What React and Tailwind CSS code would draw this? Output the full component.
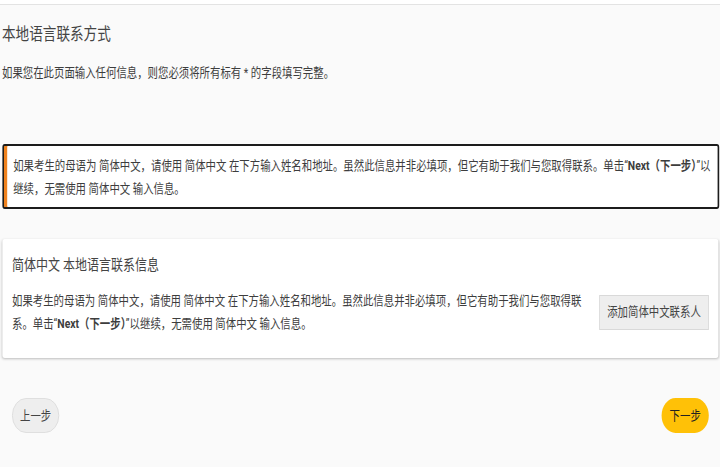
import React from "react";

const font = { fontFamily: 'Roboto, "Noto Sans CJK SC", sans-serif' };

function NextHint() {
  return (
    <>
      如果考生的母语为 简体中文，请使用 简体中文 在下方输入姓名和地址。虽然此信息并非必填项，但它有助于我们与您取得联系。单击“
      <b className="font-bold">Next（下一步）</b>”以继续，无需使用 简体中文 输入信息。
    </>
  );
}

export default function App() {
  return (
    <div className="h-[467px] overflow-hidden bg-[#fafafa]">
      <div
        className="w-[900px] origin-top-left scale-x-[0.8] text-[#3d3d3d]"
        style={font}
      >
        <div className="h-[4px] bg-white" />
        <div className="border-t border-[#e3e3e3] pl-[2.5px] pr-[1px]">
          <h1 className="mt-[17px] text-[17px] leading-[24px] text-[#444]">本地语言联系方式</h1>
          <p className="mt-[17px] text-[13px] leading-[20px]">
            如果您在此页面输入任何信息，则您必须将所有标有 * 的字段填写完整。
          </p>

          <div className="mt-[61px] rounded-[3px] border-2 border-[#1c1c1c] bg-white py-[7.5px] pl-[12px] pr-[8px] text-[13px] leading-[23px] shadow-[inset_4px_0_0_#f0831f]">
            <NextHint />
          </div>

          <div className="mt-[30px] mr-[1.5px] rounded-[3px] bg-white pt-[15px] pb-[23px] pl-[12.5px] pr-[11.5px] shadow-[0_1px_3px_rgba(0,0,0,0.25)]">
            <h2 className="text-[15px] leading-[22px] text-[#444]">简体中文 本地语言联系信息</h2>
            <div className="mt-[13px] flex items-center justify-between gap-4">
              <p className="w-[717px] text-[13px] leading-[23px]">
                <NextHint />
              </p>
              <button className="h-[35px] w-[137px] shrink-0 border border-[#d9d9d9] bg-[#eeeeee] text-[13px] text-[#444]">
                添加简体中文联系人
              </button>
            </div>
          </div>

          <div className="mt-[40px] flex items-center justify-between pl-[12.5px] pr-[13px]">
            <button className="h-[35px] w-[59px] rounded-full border border-[#dcdcdc] bg-[#eeeeee] text-[13px] text-[#444]">
              上一步
            </button>
            <button className="h-[35px] w-[59px] rounded-full bg-[#ffc107] text-[13px] text-[#222]">
              下一步
            </button>
          </div>
        </div>
      </div>
    </div>
  );
}
